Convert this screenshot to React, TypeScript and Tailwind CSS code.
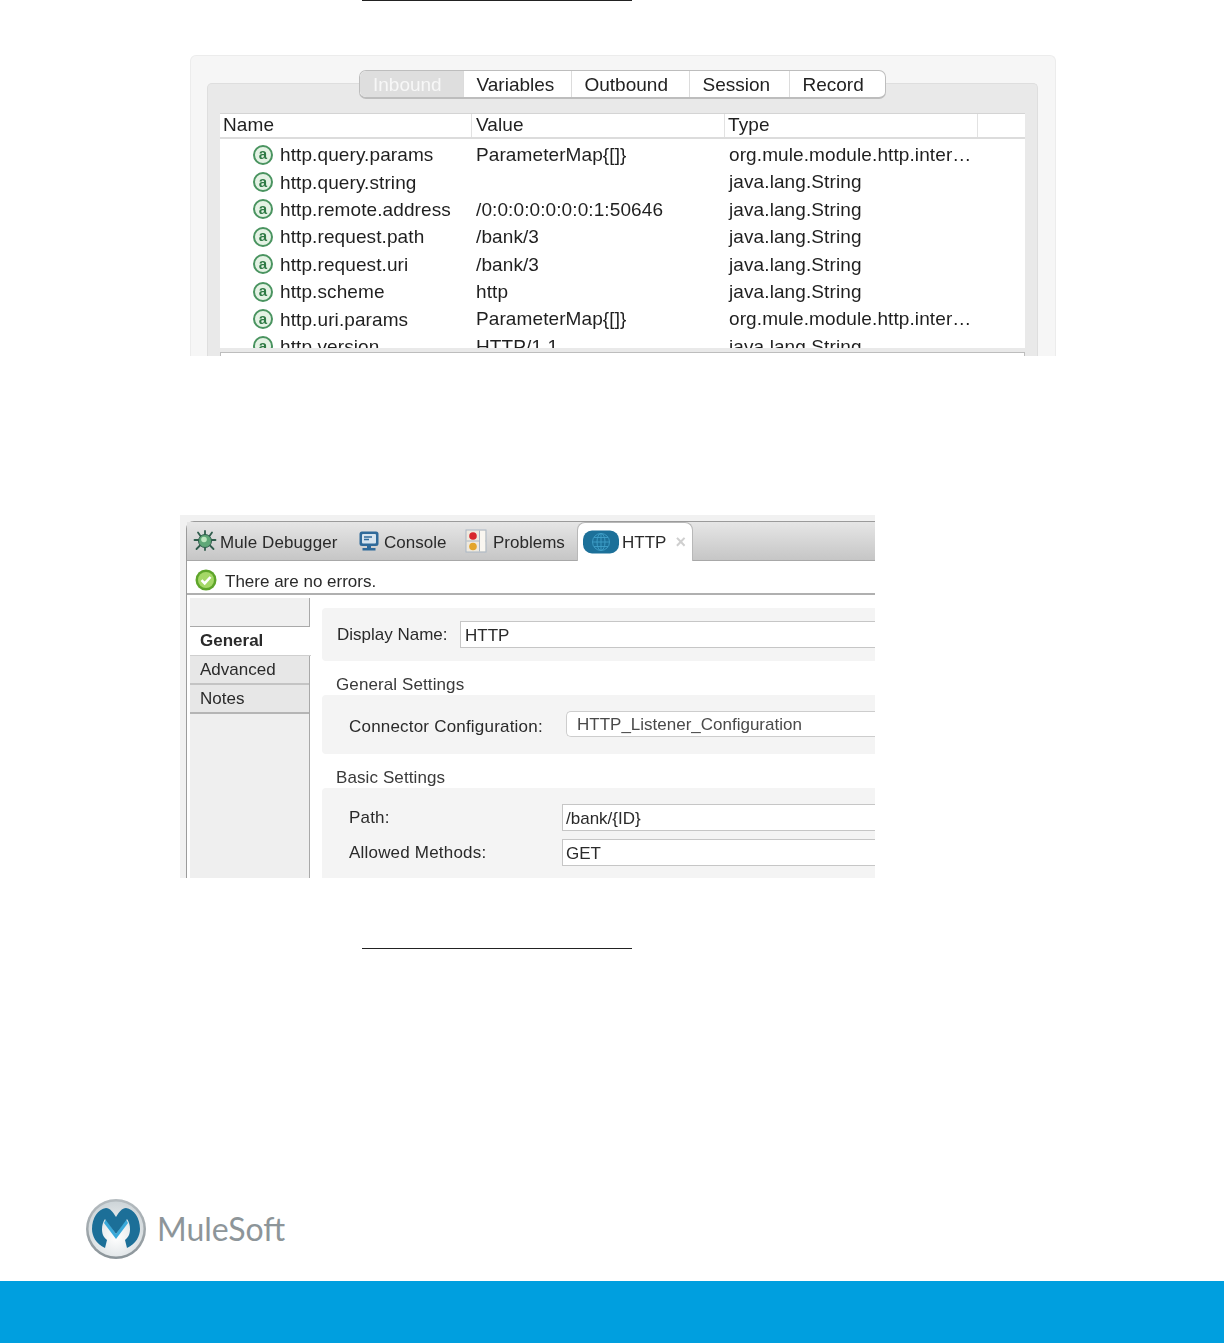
import React from "react";

const rows = [
  ["http.query.params", "ParameterMap{[]}", "org.mule.module.http.inter…"],
  ["http.query.string", "", "java.lang.String"],
  ["http.remote.address", "/0:0:0:0:0:0:0:1:50646", "java.lang.String"],
  ["http.request.path", "/bank/3", "java.lang.String"],
  ["http.request.uri", "/bank/3", "java.lang.String"],
  ["http.scheme", "http", "java.lang.String"],
  ["http.uri.params", "ParameterMap{[]}", "org.mule.module.http.inter…"],
  ["http.version", "HTTP/1.1", "java.lang.String"],
];

const tabs = [
  { label: "Variables", w: "w-[108px]" },
  { label: "Outbound", w: "w-[118px]" },
  { label: "Session", w: "w-[100px]" },
  { label: "Record", w: "w-[96px]" },
];

function BugIcon() {
  return (
    <svg viewBox="0 0 24 24" className="w-[24px] h-[24px] shrink-0">
      <g stroke="#2f5c4c" strokeWidth="1.8" strokeLinecap="round">
        <path d="M12 2v5M5 3.500l3.500 5M19 3.500l-3.500 5M1.500 11h5M17.500 11h5M3.500 20l4.500-4.500M20.500 20l-4.500-4.500M12 17v4" />
      </g>
      <circle cx="12" cy="12" r="6.500" fill="#5fa777" stroke="#2f5c4c" strokeWidth="1" />
      <circle cx="11" cy="10.500" r="2.800" fill="#bfe6c0" />
    </svg>
  );
}

function ConsoleIcon() {
  return (
    <svg viewBox="0 0 20 20" className="w-[20px] h-[20px] shrink-0">
      <rect x="0.500" y="0.500" width="19" height="14.500" rx="2.500" fill="#2f6a9a" />
      <rect x="3" y="3" width="14" height="9.500" rx="1" fill="#d6e4ef" />
      <path d="M5 6h8M5 8.500h5" stroke="#2f6a9a" strokeWidth="1.300" />
      <path d="M8 15h4v2H8zM3.500 17h13v2.500h-13z" fill="#2f6a9a" />
    </svg>
  );
}

function ProblemsIcon() {
  return (
    <svg viewBox="0 0 22 24" className="w-[22px] h-[24px] shrink-0">
      <rect x="1" y="1" width="20" height="22" fill="#efe9de" stroke="#a9b6c4" />
      <path d="M1.500 12h19M14.500 1.500v21" stroke="#a9b6c4" strokeWidth="1" />
      <circle cx="8" cy="7" r="3.800" fill="#d8262c" />
      <circle cx="8" cy="17.500" r="3.800" fill="#e3a52b" />
      <rect x="15" y="2" width="5" height="20" fill="#f9f6f0" />
    </svg>
  );
}

function GlobeIcon() {
  return (
    <svg viewBox="0 0 36 24" className="w-[36px] h-[24px] shrink-0">
      <rect x="0" y="0.500" width="36" height="23" rx="9" fill="#1c7099" />
      <g fill="none" stroke="#3f9fc8" strokeWidth="0.900">
        <circle cx="18" cy="12" r="8.500" />
        <ellipse cx="18" cy="12" rx="4" ry="8.500" />
        <path d="M18 3.500v17M9.500 12h17M11 7.500h14M11 16.500h14" />
      </g>
    </svg>
  );
}

function CheckIcon() {
  return (
    <svg viewBox="0 0 22 22" className="w-[22px] h-[22px] shrink-0">
      <circle cx="11" cy="11" r="10.500" fill="#5ea52a" />
      <circle cx="11" cy="11" r="8" fill="#a5d867" />
      <path d="M6.500 11.200l3.200 3.200 5.800-6.400" fill="none" stroke="#fff" strokeWidth="2.600" />
    </svg>
  );
}

function MuleLogo() {
  return (
    <svg viewBox="0 0 60 60" className="w-[60px] h-[60px] shrink-0">
      <defs>
        <linearGradient id="ring" x1="0" y1="0" x2="0" y2="1">
          <stop offset="0" stopColor="#b5bcc0" />
          <stop offset="1" stopColor="#8b9499" />
        </linearGradient>
        <radialGradient id="face" cx="0.5" cy="0.65" r="0.7">
          <stop offset="0" stopColor="#ffffff" />
          <stop offset="1" stopColor="#c9d1d5" />
        </radialGradient>
      </defs>
      <circle cx="30" cy="30" r="30" fill="url(#ring)" />
      <circle cx="30" cy="30" r="27.500" fill="url(#face)" />
      <path d="M20 20 L30 35 L40 20 L42 24 L30 40 L18 24Z" fill="#3aa9da" />
      <path
        d="M19 49 C10 45 6 37 6 30 C6 19 12 10 20 9 C24 9 27 13 30 18 C33 13 36 9 40 9 C48 10 54 19 54 30 C54 37 50 45 41 49 L39 41 C43 38 44 34 44 30 C44 26 43 23 41 20 L30 35 L19 20 C17 23 16 26 16 30 C16 34 17 38 21 41 Z"
        fill="#1c6f98"
      />
    </svg>
  );
}

function VariablesPanel() {
  return (
    <div className="ml-[190px] mt-[54px] w-[866px] h-[301px] overflow-hidden rounded-t-[6px] bg-[#f6f6f6] border-t border-x border-[#ececec] blur-[0.4px] pl-[16px] pr-[17px] pt-[14px]">
      <div className="flex flex-col">
        <div className="relative z-10 flex self-center h-[29px] -mb-[16px] rounded-[7px] border border-[#bdbdbd] border-b-2 bg-white text-[19px] leading-[27px] text-[#222]">
          <div className="w-[103px] pl-[13px] rounded-l-[6px] bg-[#dedede] text-[#f7f7f7]">Inbound</div>
          {tabs.map((t) => (
            <div key={t.label} className={`${t.w} pl-[12.500px] border-l border-[#dcdcdc]`}>
              {t.label}
            </div>
          ))}
        </div>
        <div className="h-[280px] rounded-t-[5px] border-t border-x border-[#dedede] bg-[#e9e9e9] pt-[29px] px-[12px]">
          <div className="h-[235px] overflow-hidden bg-white border-t border-[#d4d4d4] text-[19px] text-[#1f1f1f] tracking-[0.1px]">
            <div className="grid grid-cols-[252px_253px_253px_1fr] h-[25px] border-b-2 border-[#dcdcdc] leading-[22px]">
              <div className="pl-[3px] border-r border-[#e2e2e2]">Name</div>
              <div className="pl-[4px] border-r border-[#e2e2e2]">Value</div>
              <div className="pl-[3px] border-r border-[#e2e2e2]">Type</div>
              <div />
            </div>
            <div className="pt-[2px]">
              {rows.map((r) => (
                <div key={r[0]} className="grid grid-cols-[252px_253px_253px_1fr] h-[27.4px] leading-[27px]">
                  <div className="flex items-center pl-[33px]">
                    <span className="flex items-center justify-center w-[20px] h-[20px] shrink-0 rounded-full border-2 border-[#4a9460] bg-[#e4f2e4] text-[15px] font-bold leading-none text-[#2f7a45] pb-[2px]">
                      a
                    </span>
                    <span className="ml-[7px]">{r[0]}</span>
                  </div>
                  <div className="pl-[4px]">{r[1]}</div>
                  <div className="pl-[4px] whitespace-nowrap">{r[2]}</div>
                  <div />
                </div>
              ))}
            </div>
          </div>
          <div className="mt-[4px] h-[6px] bg-white border-t border-x border-[#bdbdbd]" />
        </div>
      </div>
    </div>
  );
}

function Label({ children }: { children: React.ReactNode }) {
  return <div className="text-[17px] leading-[20px] text-[#3a3a3a] tracking-[0.1px]">{children}</div>;
}

function ConnectorPanel() {
  return (
    <div className="ml-[180px] mt-[159px] w-[695px] h-[363px] overflow-hidden bg-[#f1f1f1] pl-[6px] pt-[6px] blur-[0.5px] text-[17px] text-[#2a2a2a]">
      <div className="h-full rounded-tl-[8px] border-l border-t border-[#9b9b9b] bg-white flex flex-col">
        <div className="flex items-end h-[39px] shrink-0 bg-gradient-to-b from-[#e6e6e6] to-[#c6c6c6] border-b border-[#a8a8a8]">
          <div className="flex items-center gap-[3px] pl-[6px] w-[172px] h-full">
            <BugIcon />
            <span className="mt-[3px] tracking-[0.1px]">Mule Debugger</span>
          </div>
          <div className="flex items-center gap-[5px] w-[106px] h-full">
            <ConsoleIcon />
            <span className="mt-[3px]">Console</span>
          </div>
          <div className="flex items-center gap-[6px] w-[112px] h-full">
            <ProblemsIcon />
            <span className="mt-[3px]">Problems</span>
          </div>
          <div className="flex items-center gap-[3px] w-[116px] h-[39px] -mb-px pl-[5px] rounded-t-[8px] bg-white border-t border-x border-[#b8b8b8]">
            <GlobeIcon />
            <span className="mt-[1px]">HTTP</span>
            <span className="ml-[6px] text-[18px] leading-none font-bold text-[#cfcfcf]">×</span>
          </div>
        </div>
        <div className="flex items-center gap-[8px] h-[34px] shrink-0 pl-[8px] pt-[6px] border-b-2 border-[#b0b0b0] bg-white">
          <CheckIcon />
          <span className="mt-[3px]">There are no errors.</span>
        </div>
        <div className="flex flex-1 min-h-0 pt-[3px]">
          <div className="w-[120px] ml-[3px] shrink-0 flex flex-col border-r border-[#a9a9a9] bg-[#efefef]">
            <div className="h-[29px] bg-[#f0f0f0] border-b border-[#a9a9a9]" />
            <div className="h-[29px] pl-[10px] bg-white font-bold leading-[28px] border-b border-[#cfcfcf] w-[121px]">General</div>
            <div className="h-[29px] pl-[10px] bg-[#e7e7e7] leading-[28px] border-b-2 border-[#c4c4c4]">Advanced</div>
            <div className="h-[29px] pl-[10px] bg-[#e7e7e7] leading-[28px] border-b-2 border-[#b5b5b5]">Notes</div>
          </div>
          <div className="flex-1 min-w-0 pl-[12px] pt-[10px]">
            <div className="flex items-center h-[53px] pl-[15px] rounded-l-[4px] bg-[#f4f4f4]">
              <span className="w-[123px]">Display Name:</span>
              <div className="flex-1 h-[27px] bg-white border-y border-l border-[#c6c6c6] pl-[4px] leading-[27px]">HTTP</div>
            </div>
            <div className="pl-[14px] mt-[14px]">
              <Label>General Settings</Label>
            </div>
            <div className="flex items-center h-[59px] pl-[27px] rounded-l-[4px] bg-[#f4f4f4]">
              <span className="w-[217px] mt-[4px] tracking-[0.2px]">Connector Configuration:</span>
              <div className="flex-1 h-[26px] bg-white border-y border-l border-[#cdcdcd] rounded-l-[5px] pl-[10px] leading-[25px] -mt-[2px] text-[#4a4a4a]">HTTP_Listener_Configuration</div>
            </div>
            <div className="pl-[14px] mt-[14px]">
              <Label>Basic Settings</Label>
            </div>
            <div className="h-[100px] pl-[27px] pt-[16px] rounded-l-[4px] bg-[#f4f4f4]">
              <div className="flex items-center h-[27px]">
                <span className="w-[213px] mt-[1px] tracking-[0.2px]">Path:</span>
                <div className="flex-1 h-[27px] bg-white border-y border-l border-[#c6c6c6] pl-[3px] leading-[27px]">/bank/{"{ID}"}</div>
              </div>
              <div className="flex items-center h-[27px] mt-[8px]">
                <span className="w-[213px] mt-[1px] tracking-[0.2px]">Allowed Methods:</span>
                <div className="flex-1 h-[27px] bg-white border-y border-l border-[#c6c6c6] pl-[3px] leading-[27px]">GET</div>
              </div>
            </div>
          </div>
        </div>
      </div>
    </div>
  );
}

export default function App() {
  return (
    <div className="w-[1224px] h-[1343px] flex flex-col overflow-hidden bg-white font-['Liberation_Sans',Arial,sans-serif]">
      <div className="ml-[362px] w-[270px] h-px shrink-0 bg-[#222]" />
      <VariablesPanel />
      <ConnectorPanel />
      <div className="ml-[362px] mt-[70px] w-[270px] h-px shrink-0 bg-[#222]" />
      <div className="ml-[86px] mt-[250px] flex items-center gap-[11px]">
        <MuleLogo />
        <span className="font-['Lato',sans-serif] font-normal text-[32px] leading-none text-[#8d9599]">MuleSoft</span>
      </div>
      <div className="mt-auto h-[62px] shrink-0 bg-[#009fdf]" />
    </div>
  );
}
